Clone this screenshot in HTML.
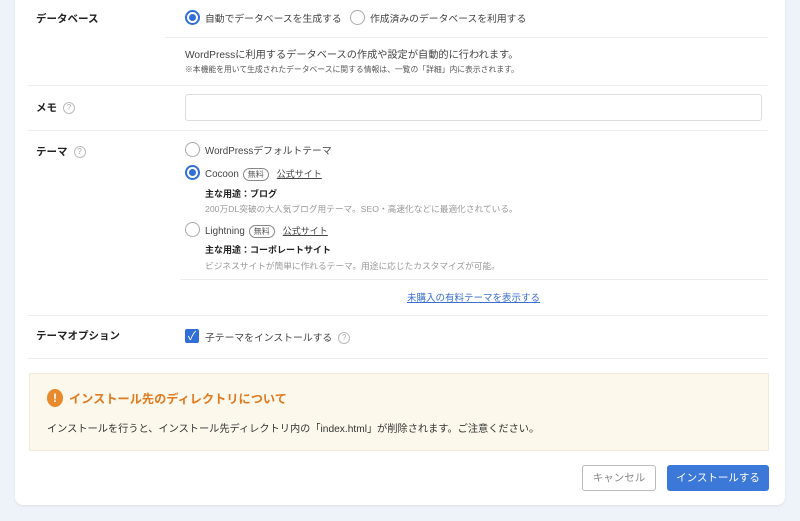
<!DOCTYPE html>
<html><head><meta charset="utf-8"><style>
*{margin:0;padding:0;box-sizing:border-box}
body{width:800px;height:521px;background:#eef2f9;font-family:"Liberation Sans","Noto Sans CJK JP",sans-serif;color:#333;position:relative;overflow:hidden}
.card{position:absolute;left:15px;top:-10px;width:770px;height:515px;background:#fff;border-radius:8px;box-shadow:0 1px 2px rgba(0,0,0,.08)}
.a{position:absolute;white-space:nowrap}
.lbl{font-size:10.5px;font-weight:bold;color:#222}
.hr{position:absolute;height:1px;background:#ececec}
.radio{position:absolute;width:15px;height:15px;border:1px solid #aaa;border-radius:50%;background:#fff}
.radio.on{border:2px solid #2f6fd6}
.radio.on::after{content:"";position:absolute;left:2px;top:2px;width:7px;height:7px;border-radius:50%;background:#2f6fd6}
.t{font-size:9.8px;color:#444}
.q{display:inline-block;width:12px;height:12px;border:1px solid #bbb;border-radius:50%;font-size:8px;color:#aaa;text-align:center;line-height:10px;vertical-align:middle;margin-left:6px;font-weight:normal}
.tag{display:inline-block;border:1px solid #888;border-radius:8px;font-size:8px;padding:0 4px;line-height:11px;margin:0 8px 0 4px;color:#555}
.lnk{font-size:9px;color:#444;text-decoration:underline}
.s{font-size:8.7px;color:#999}
.b{font-size:9px;font-weight:bold;color:#222}
</style></head><body>
<div class="card"></div>
<div class="a lbl" style="left:36px;top:11px">データベース</div>
<div class="radio on" style="left:185px;top:10px"></div>
<div class="a t" style="left:205px;top:11px">自動でデータベースを生成する</div>
<div class="radio" style="left:350px;top:10px"></div>
<div class="a t" style="left:370px;top:11px">作成済みのデータベースを利用する</div>
<div class="hr" style="left:165px;top:37px;width:603px"></div>
<div class="a" style="left:185px;top:46px;font-size:10.2px;color:#444">WordPressに利用するデータベースの作成や設定が自動的に行われます。</div>
<div class="a" style="left:185px;top:64px;font-size:7.8px;color:#555">※本機能を用いて生成されたデータベースに関する情報は、一覧の「詳細」内に表示されます。</div>
<div class="hr" style="left:28px;top:85px;width:740px"></div>
<div class="a lbl" style="left:36px;top:100px">メモ<span class="q">?</span></div>
<div class="a" style="left:185px;top:94px;width:577px;height:27px;border:1px solid #ddd;border-radius:3px"></div>
<div class="hr" style="left:28px;top:130px;width:740px"></div>
<div class="a lbl" style="left:36px;top:144px">テーマ<span class="q">?</span></div>
<div class="radio" style="left:185px;top:142px"></div>
<div class="a t" style="left:205px;top:143px">WordPressデフォルトテーマ</div>
<div class="radio on" style="left:185px;top:165px"></div>
<div class="a t" style="left:205px;top:167px">Cocoon<span class="tag">無料</span><span class="lnk">公式サイト</span></div>
<div class="a b" style="left:205px;top:187px">主な用途：ブログ</div>
<div class="a s" style="left:205px;top:202px">200万DL突破の大人気ブログ用テーマ。SEO・高速化などに最適化されている。</div>
<div class="radio" style="left:185px;top:222px"></div>
<div class="a t" style="left:205px;top:224px">Lightning<span class="tag">無料</span><span class="lnk">公式サイト</span></div>
<div class="a b" style="left:205px;top:243px">主な用途：コーポレートサイト</div>
<div class="a s" style="left:205px;top:259px">ビジネスサイトが簡単に作れるテーマ。用途に応じたカスタマイズが可能。</div>
<div class="hr" style="left:180px;top:279px;width:588px"></div>
<div class="a" style="left:407px;top:290px;font-size:9.5px;color:#3a6fcf;text-decoration:underline">未購入の有料テーマを表示する</div>
<div class="hr" style="left:28px;top:315px;width:740px"></div>
<div class="a lbl" style="left:36px;top:328px">テーマオプション</div>
<div class="a" style="left:185px;top:329px;width:14px;height:14px;background:#2f6fd6;border-radius:2px;color:#fff;font-size:12px;line-height:14px;text-align:center">✓</div>
<div class="a t" style="left:205px;top:330px">子テーマをインストールする<span class="q">?</span></div>
<div class="hr" style="left:28px;top:358px;width:740px"></div>
<div class="a" style="left:29px;top:373px;width:740px;height:78px;background:#fcf8ec;border:1px solid #f0ead8"></div>
<div class="a" style="left:47px;top:389px;width:16px;height:18px;border-radius:50%;background:#e8892b;color:#fff;font-size:12px;font-weight:bold;text-align:center;line-height:18px">!</div>
<div class="a" style="left:69px;top:389px;font-size:12.2px;font-weight:bold;color:#e07a1f">インストール先のディレクトリについて</div>
<div class="a" style="left:47px;top:420px;font-size:10.2px;color:#333">インストールを行うと、インストール先ディレクトリ内の「index.html」が削除されます。ご注意ください。</div>
<div class="a" style="left:582px;top:465px;width:74px;height:26px;border:1px solid #bbb;border-radius:3px;font-size:10.5px;color:#888;text-align:center;line-height:24px">キャンセル</div>
<div class="a" style="left:667px;top:465px;width:102px;height:26px;background:#3b78d8;border-radius:3px;font-size:10.5px;color:#fff;text-align:center;line-height:26px">インストールする</div>
</body></html>
